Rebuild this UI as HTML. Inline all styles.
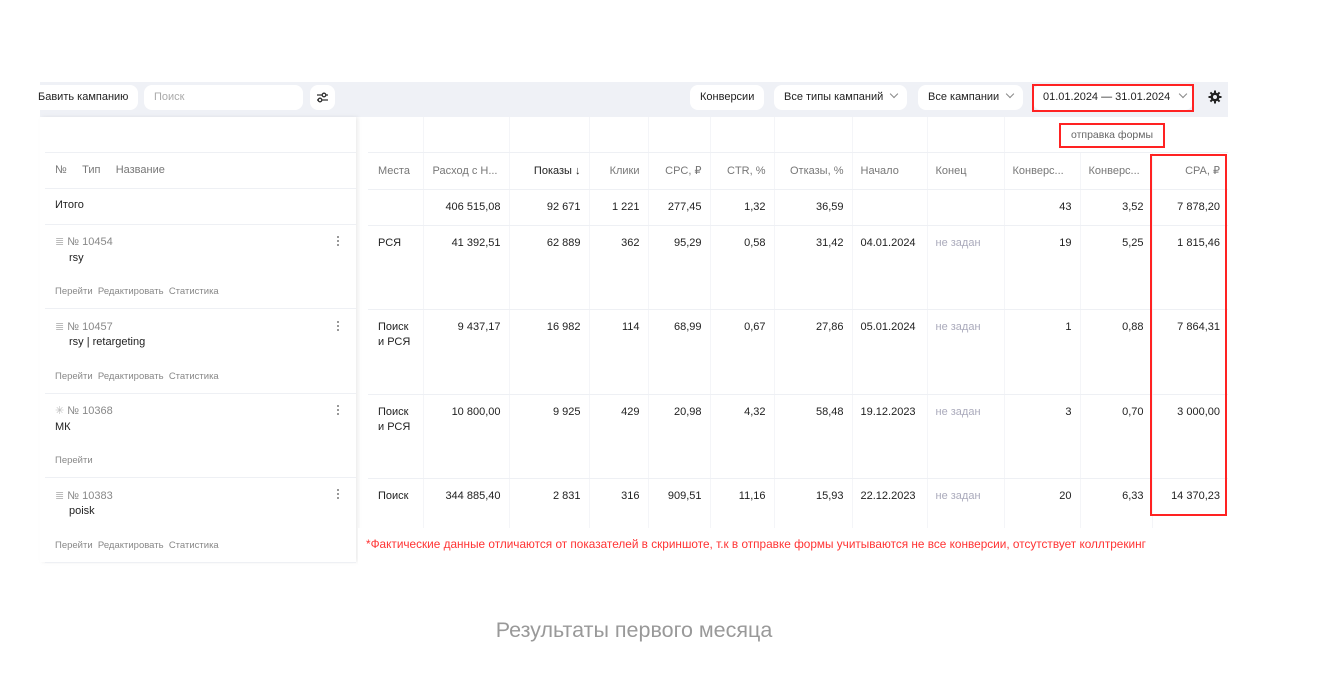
<!DOCTYPE html>
<html><head><meta charset="utf-8"><style>
*{margin:0;padding:0;box-sizing:border-box}
body{width:1340px;height:692px;background:#fff;font-family:"Liberation Sans",sans-serif;font-size:11px;color:#222;position:relative;overflow:hidden}
.a{position:absolute}
.tb{left:40px;top:82px;width:1188px;height:35px;background:#eff1f6}
.btn{position:absolute;top:85px;height:25px;background:#fff;border-radius:8px;font-size:11px;line-height:25px;padding:0 10px;color:#222;white-space:nowrap}
.chev{display:inline-block;width:6px;height:6px;border-right:1px solid #888;border-bottom:1px solid #888;transform:rotate(45deg);margin-left:8px;position:relative;top:-3px}
.left{left:40px;top:117px;width:316px;height:445px;background:#fff;box-shadow:2px 0 4px rgba(0,0,0,.08)}
.hl{position:absolute;left:45px;height:1px;background:#eef0f4}
table{position:absolute;left:368px;top:117px;border-collapse:collapse;table-layout:fixed}
td{border-left:1px solid #f4f5f8;border-bottom:1px solid #eef0f4;vertical-align:top;text-align:right;padding:0 8px;white-space:nowrap;overflow:hidden;font-size:11px}
tr:last-child td{border-bottom:none}
td:first-child{border-left:none;text-align:left;padding-left:10px}
tr.h td{color:#777;line-height:36px}
tr.t td{line-height:35px}
tr.d td{padding-top:10px;line-height:15px}
.l{text-align:left!important}
.g{color:#aab}
.red{position:absolute;border:2px solid #f22}
.lk{position:absolute;font-size:9.5px;color:#888}
.dots{position:absolute;left:337px;width:2px;height:2px;background:#999;box-shadow:0 4px 0 #999,0 8px 0 #999}
</style></head><body>
<div class="a tb"></div>
<div class="btn" style="left:36px;padding-left:2px;border-radius:0 8px 8px 0">Бавить кампанию</div>
<div class="btn" style="left:144px;width:159px;color:#aaa">Поиск</div>
<div class="btn" style="left:310px;width:25px;padding:0">
<svg width="25" height="25" viewBox="0 0 25 25"><g stroke="#333" stroke-width="1.3" fill="none"><path d="M7 10h11M7 15h11"/><circle cx="14" cy="10" r="1.8" fill="#fff"/><circle cx="10" cy="15" r="1.8" fill="#fff"/></g></svg></div>
<div class="btn" style="left:690px">Конверсии</div>
<div class="btn" style="left:774px">Все типы кампаний<span class="chev"></span></div>
<div class="btn" style="left:918px">Все кампании<span class="chev"></span></div>
<div class="btn" style="left:1033px;width:160px">01.01.2024 — 31.01.2024<span class="chev" style="margin-left:10px"></span></div>
<div class="red" style="left:1032px;top:84px;width:162px;height:28px"></div>
<svg class="a" style="left:1207px;top:89px" width="16" height="16" viewBox="0 0 16 16"><g fill="#222"><circle cx="8" cy="8" r="4.5"/><rect x="7" y="1.5" width="2" height="13"/><rect x="1.5" y="7" width="13" height="2"/><rect x="7" y="1.5" width="2" height="13" transform="rotate(45 8 8)"/><rect x="7" y="1.5" width="2" height="13" transform="rotate(-45 8 8)"/></g><circle cx="8" cy="8" r="2" fill="#eff1f6"/></svg>

<div class="a left"></div>
<div class="hl" style="top:152px;width:311px"></div>
<div class="hl" style="top:188px;width:311px"></div>
<div class="hl" style="top:224px;width:311px"></div>
<div class="hl" style="top:308px;width:311px"></div>
<div class="hl" style="top:393px;width:311px"></div>
<div class="hl" style="top:477px;width:311px"></div>
<div class="hl" style="top:562px;width:311px"></div>
<div class="a" style="left:55px;top:164px;color:#777">№ &nbsp; &nbsp; Тип &nbsp; &nbsp; Название</div>
<div class="a" style="left:55px;top:199px">Итого</div>

<div class="a" style="left:55px;top:235px;color:#888"><span style="color:#bbb">≣</span> № 10454</div>
<div class="a" style="left:69px;top:252px">rsy</div>
<div class="lk" style="left:55px;top:286px">Перейти &nbsp;Редактировать &nbsp;Статистика</div>
<div class="dots" style="top:236px"></div>

<div class="a" style="left:55px;top:320px;color:#888"><span style="color:#bbb">≣</span> № 10457</div>
<div class="a" style="left:69px;top:336px">rsy | retargeting</div>
<div class="lk" style="left:55px;top:371px">Перейти &nbsp;Редактировать &nbsp;Статистика</div>
<div class="dots" style="top:321px"></div>

<div class="a" style="left:55px;top:404px;color:#888"><span style="color:#bbb">✳</span> № 10368</div>
<div class="a" style="left:55px;top:421px">МК</div>
<div class="lk" style="left:55px;top:455px">Перейти</div>
<div class="dots" style="top:405px"></div>

<div class="a" style="left:55px;top:489px;color:#888"><span style="color:#bbb">≣</span> № 10383</div>
<div class="a" style="left:69px;top:505px">poisk</div>
<div class="lk" style="left:55px;top:540px">Перейти &nbsp;Редактировать &nbsp;Статистика</div>
<div class="dots" style="top:489px"></div>

<table>
<colgroup><col style="width:55px"><col style="width:86px"><col style="width:80px"><col style="width:59px"><col style="width:62px"><col style="width:64px"><col style="width:78px"><col style="width:75px"><col style="width:77px"><col style="width:76px"><col style="width:72px"><col style="width:76px"></colgroup>
<tr style="height:35px"><td></td><td></td><td></td><td></td><td></td><td></td><td></td><td></td><td></td><td colspan="3"></td></tr>
<tr class="h" style="height:36px"><td>Места</td><td class="l" style="padding-left:9px">Расход с Н...</td><td style="color:#222">Показы ↓</td><td>Клики</td><td>CPC, ₽</td><td>CTR, %</td><td>Отказы, %</td><td class="l">Начало</td><td class="l">Конец</td><td class="l">Конверс...</td><td class="l">Конверс...</td><td>CPA, ₽</td></tr>
<tr class="t" style="height:36px"><td></td><td>406 515,08</td><td>92 671</td><td>1 221</td><td>277,45</td><td>1,32</td><td>36,59</td><td></td><td></td><td>43</td><td>3,52</td><td>7 878,20</td></tr>
<tr class="d" style="height:84px"><td>РСЯ</td><td>41 392,51</td><td>62 889</td><td>362</td><td>95,29</td><td>0,58</td><td>31,42</td><td class="l">04.01.2024</td><td class="l g">не задан</td><td>19</td><td>5,25</td><td>1 815,46</td></tr>
<tr class="d" style="height:85px"><td>Поиск<br>и РСЯ</td><td>9 437,17</td><td>16 982</td><td>114</td><td>68,99</td><td>0,67</td><td>27,86</td><td class="l">05.01.2024</td><td class="l g">не задан</td><td>1</td><td>0,88</td><td>7 864,31</td></tr>
<tr class="d" style="height:84px"><td>Поиск<br>и РСЯ</td><td>10 800,00</td><td>9 925</td><td>429</td><td>20,98</td><td>4,32</td><td>58,48</td><td class="l">19.12.2023</td><td class="l g">не задан</td><td>3</td><td>0,70</td><td>3 000,00</td></tr>
<tr class="d" style="height:85px"><td>Поиск</td><td>344 885,40</td><td>2 831</td><td>316</td><td>909,51</td><td>11,16</td><td>15,93</td><td class="l">22.12.2023</td><td class="l g">не задан</td><td>20</td><td>6,33</td><td>14 370,23</td></tr>
</table>
<div class="a" style="left:358px;top:528px;width:872px;height:36px;background:#fff"></div>
<div class="a" style="left:366px;top:537px;color:#f33;font-size:11.8px;white-space:nowrap">*Фактические данные отличаются от показателей в скриншоте, т.к в отправке формы учитываются не все конверсии, отсутствует коллтрекинг</div>

<div class="a" style="left:1059px;top:123px;width:106px;height:25px;line-height:25px;text-align:center;color:#666;font-size:10.5px">отправка формы</div>
<div class="red" style="left:1059px;top:123px;width:106px;height:25px"></div>
<div class="red" style="left:1150px;top:154px;width:77px;height:362px"></div>

<div class="a" style="left:0;width:1268px;top:618px;text-align:center;font-size:21.5px;color:#999">Результаты первого месяца</div>
</body></html>
